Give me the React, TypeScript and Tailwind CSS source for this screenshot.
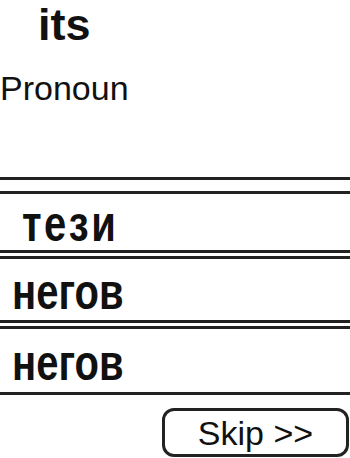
import React from "react";

const rows = [
  { word: "тези", pad: "pl-[22px]", h: "h-[62px]", track: "tracking-[2.5px]" },
  { word: "негов", pad: "pl-[12px]", h: "h-[67px]", track: "tracking-[0px]" },
  { word: "негов", pad: "pl-[12px]", h: "h-[69px]", track: "tracking-[0px]" },
];

export default function App() {
  return (
    <div className="w-[350px] h-[458px] overflow-hidden bg-white text-[#111] font-['Liberation_Sans',Arial,sans-serif]">
      <div className="pl-[38px] text-[45px] leading-[1.12] font-bold h-[46px]">its</div>
      <div className="mt-[25px] text-[34px] leading-none h-[34px]">Pronoun</div>

      <div className="mt-[72px] h-[3px] bg-[#222]" />

      <div className="mt-[11px] flex flex-col gap-[3px]">
        {rows.map((r, i) => (
          <div
            key={i}
            className={`${r.h} ${r.pad} flex items-center pt-[2px] border-y-[3px] border-[#222]`}
          >
            <span className={`${r.track} text-[40px] leading-none font-bold scale-y-[1.25]`}>
              {r.word}
            </span>
          </div>
        ))}
      </div>

      <div className="mt-[13px] flex justify-end pr-[1px]">
        <button className="w-[187px] h-[49px] border-[3px] border-[#222] rounded-[12px] text-[34px] leading-none flex items-center justify-center">
          Skip &gt;&gt;
        </button>
      </div>
    </div>
  );
}
